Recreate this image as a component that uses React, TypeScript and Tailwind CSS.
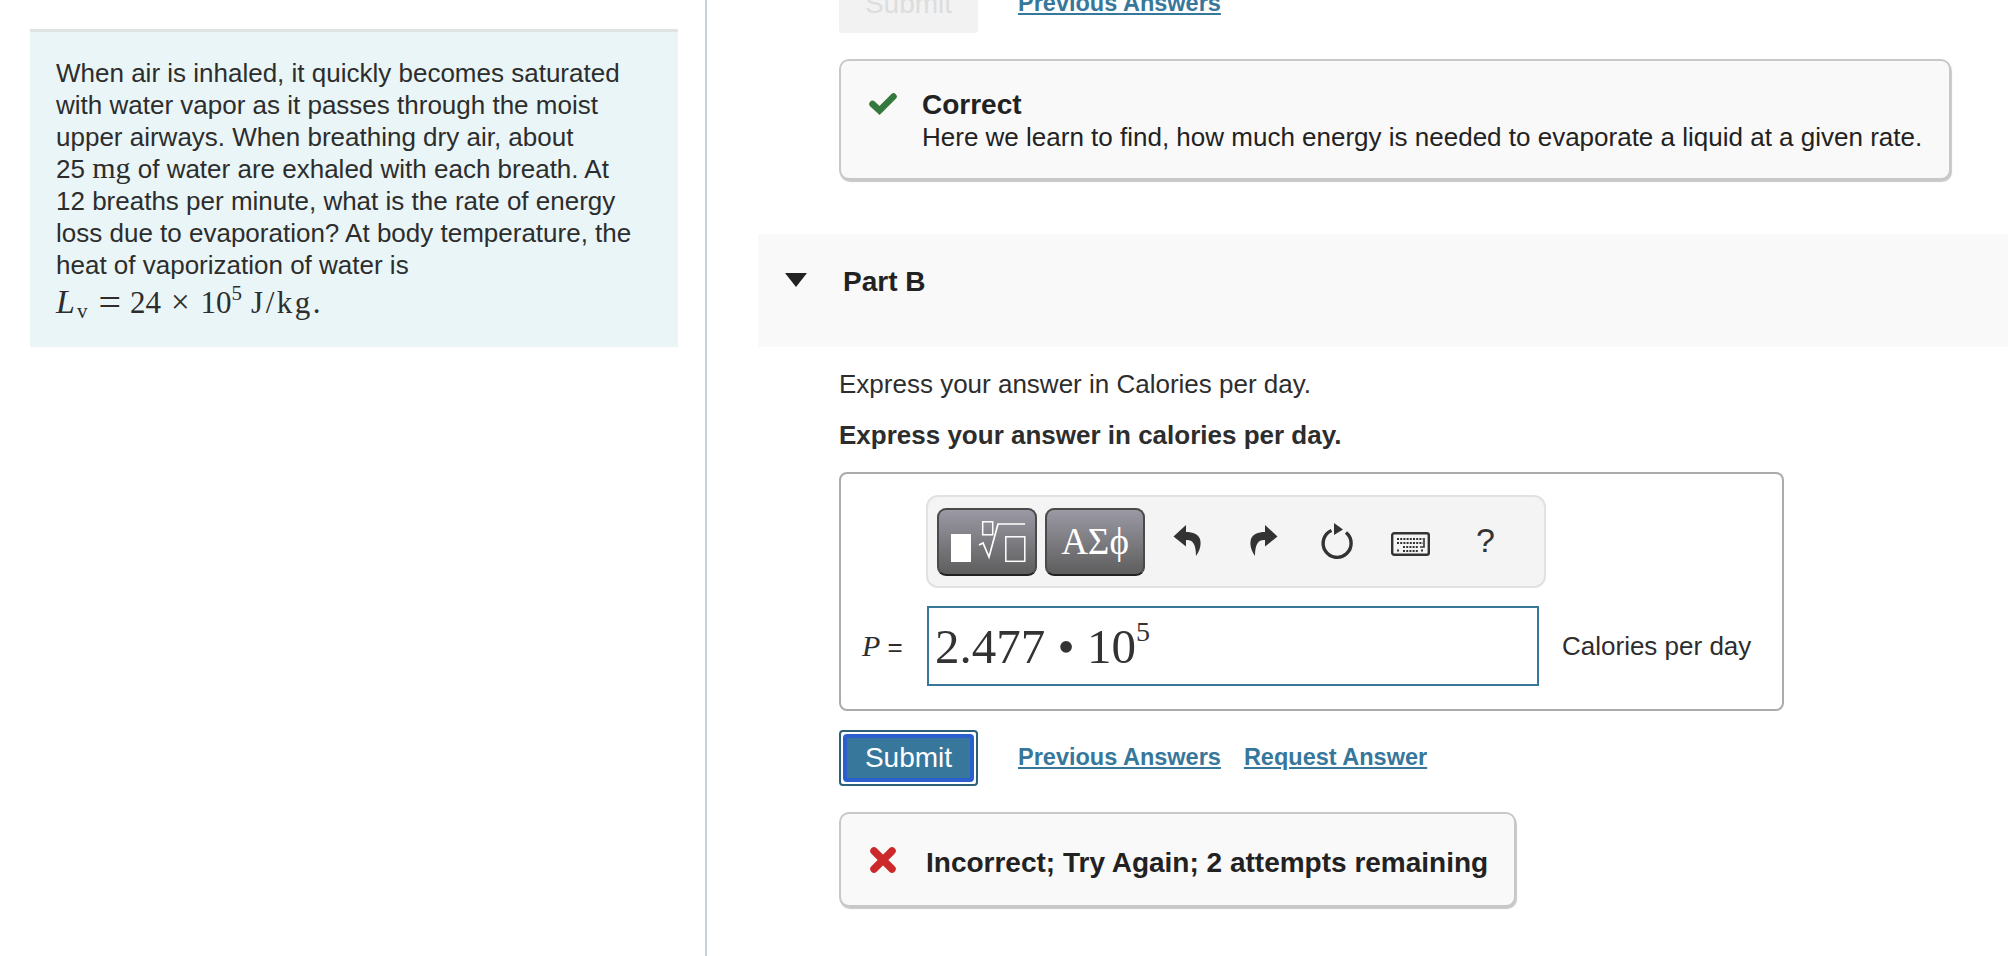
const sans = "font-['Liberation_Sans',Arial,sans-serif]";
const serif = "font-['Liberation_Serif','Times_New_Roman',serif]";

const CheckIcon = () => (
  <svg width="28" height="22" viewBox="0 0 28 22" className="block">
    <path d="M3.5 11 L10.5 17.5 L24.5 3.5" fill="none" stroke="#347a3f" strokeWidth="6.5" strokeLinejoin="miter" strokeLinecap="round" />
  </svg>
);

const CrossIcon = () => (
  <svg width="28" height="28" viewBox="0 0 28 28" className="block">
    <path d="M5 5 L23 23 M23 5 L5 23" fill="none" stroke="#cc2a2a" strokeWidth="7.5" strokeLinecap="round" />
  </svg>
);

const ReplyIcon = ({ flip }: { flip?: boolean }) => (
  <svg width="28" height="31" viewBox="0 0 28 31" className={flip ? "block -scale-x-100" : "block"}>
    <path d="M13 0 L0.5 11.5 L13 21.5 L13 15 C19 14.5 23 18 23 31 C27 25 28.5 20 27 14 C25.5 9.5 20 7 13 7 Z" fill="#333333" />
  </svg>
);

const ResetIcon = () => (
  <svg width="34" height="38" viewBox="0 0 34 38" className="block">
    <path d="M12.5 8.5 A14 14 0 1 0 27 10.5" fill="none" stroke="#333333" strokeWidth="3.4" />
    <path d="M15 1 L24 7.5 L15 13 Z" fill="#333333" />
  </svg>
);

const KeyboardIcon = () => (
  <svg width="39" height="24" viewBox="0 0 39 24" className="block">
    <rect x="1.2" y="1.2" width="36.6" height="21.6" rx="2" fill="#f4f4f4" stroke="#333333" strokeWidth="2.4" />
    <path d="M6 7 H32 M6 11 H32 M12 15 H28 M6 18.5 H8 M12 19 H27 M30 18.5 H33" fill="none" stroke="#333333" strokeWidth="1.8" strokeDasharray="2 1.2" />
    <path d="M33 6 V15 H29" fill="none" stroke="#333333" strokeWidth="1.6" />
  </svg>
);

const TemplateIcon = () => (
  <svg width="76" height="42" viewBox="0 0 76 42" className="block ml-[3px]">
    <rect x="0" y="13" width="20" height="28" fill="#ffffff" />
    <rect x="31.7" y="0.8" width="10" height="13" fill="none" stroke="#ffffff" strokeWidth="1.5" />
    <path d="M28 24 L32 22 L38 36 L47 3 H74" fill="none" stroke="#ffffff" strokeWidth="1.7" />
    <rect x="54.8" y="15.8" width="19" height="24.5" fill="none" stroke="#ffffff" strokeWidth="1.5" />
  </svg>
);

const toolButton =
  "w-[100px] h-[68px] flex items-center justify-center rounded-[9px] border-2 border-[#4a4a4a] border-b-[#222222] bg-gradient-to-b from-[#9b9aa5] to-[#5e5e5e]";

const linkClass = "text-[23.5px] font-bold text-[#37779b] underline leading-8";

export default function App() {
  return (
    <div className={`${sans} h-[956px] w-[2008px] overflow-hidden bg-white flex text-[26px] leading-8 text-[#2d2d2d]`}>
      {/* left column */}
      <div className="w-[707px] h-full shrink-0 border-r-2 border-[#c3d1de] pl-[30px] pr-[27px] pt-[29px]">
        <div className="h-[318px] border-t-[3px] border-[#dfe3e4] bg-[#e9f5f7] pl-[26px] pt-[25px]">
          <p>
            When air is inhaled, it quickly becomes saturated
            <br />
            with water vapor as it passes through the moist
            <br />
            upper airways. When breathing dry air, about
            <br />
            25 <span className={`${serif} text-[30px] leading-none`}>mg</span> of water are exhaled with each breath. At
            <br />
            12 breaths per minute, what is the rate of energy
            <br />
            loss due to evaporation? At body temperature, the
            <br />
            heat of vaporization of water is
          </p>
          <p className={`${serif} text-[31px] leading-[37px] -mt-[1px] flex items-baseline whitespace-nowrap`}>
            <i className="text-[34px]">L</i>
            <span className="text-[21px] relative top-[5px] ml-[2px]">v</span>
            <span className="text-[40px] leading-none relative top-[3px] ml-[11px] mr-[9px]">=</span>
            24
            <span className="text-[33px] leading-none ml-[10px] mr-[11px]">×</span>
            10
            <span className="text-[21px] relative -top-[13px]">5</span>
            <span className="ml-[9px] tracking-[2.5px]">J/kg.</span>
          </p>
        </div>
      </div>

      {/* right column */}
      <div className="flex-1 min-w-0">
        <div className="pl-[132px] -mt-[23px] flex items-center h-14">
          <div className="w-[139px] h-14 rounded-[3px] bg-[#f2f2f2] text-[#dddddd] text-[28px] flex items-center justify-center">
            <span className="-mt-[2px]">Submit</span>
          </div>
          <a className={`${linkClass} ml-10 -mt-1`}>Previous Answers</a>
        </div>

        <div className="ml-[132px] mt-[26px] w-[1112px] h-[121px] rounded-[10px] border-2 border-[#c8c8c8] bg-[#f9f9f9] shadow-[1px_2px_1px_#c8c8c8] flex pl-[28px] pt-[28px]">
          <div className="w-[53px] pt-[4px]">
            <CheckIcon />
          </div>
          <div>
            <div className="font-bold text-[28px] text-[#222222]">Correct</div>
            <div className="text-[#222222]">Here we learn to find, how much energy is needed to evaporate a liquid at a given rate.</div>
          </div>
        </div>

        <div className="ml-[51px] mt-[54px] h-[113px] bg-[#f9f9f9] flex pl-[27px] pt-[32px]">
          <div className="w-[58px] pt-[7px]">
            <svg width="22" height="14" viewBox="0 0 22 14" className="block">
              <path d="M0 0 H22 L11 14 Z" fill="#222222" />
            </svg>
          </div>
          <div className="font-bold text-[28px] text-[#222222]">Part B</div>
        </div>

        <div className="pl-[132px] pt-[21px]">
          <p>Express your answer in Calories per day.</p>
          <p className="font-bold mt-[19px]">Express your answer in calories per day.</p>

          <div className="mt-[21px] w-[945px] h-[239px] rounded-[8px] border-2 border-[#ababab] pt-[21px]">
            <div className="ml-[85px] w-[620px] h-[93px] rounded-[12px] border-2 border-[#e1e1e1] bg-[#f4f4f4] flex items-center pl-[9px]">
              <div className={toolButton}>
                <TemplateIcon />
              </div>
              <div className={`${toolButton} ml-2 ${serif} text-[37px] text-white`}>ΑΣϕ</div>
              <div className="ml-[28px] pb-[2px]">
                <ReplyIcon />
              </div>
              <div className="ml-[49px] pb-[2px]">
                <ReplyIcon flip />
              </div>
              <div className="ml-[41px] pb-[2px]">
                <ResetIcon />
              </div>
              <div className="ml-[38px] pt-[5px]">
                <KeyboardIcon />
              </div>
              <div className="ml-[46px] text-[34px] text-[#333333] pb-[4px]">?</div>
            </div>

            <div className="mt-[18px] flex items-center">
              <div className="w-[86px] pl-[21px] whitespace-nowrap">
                <i className={`${serif} text-[30px]`}>P</i> =
              </div>
              <div className={`${serif} w-[612px] h-[80px] border-2 border-[#37779b] bg-white pl-[6px] text-[49px] leading-[78px] text-[#333333]`}>
                2.477 • 10
                <span className="text-[28px] leading-none relative -top-[22px]">5</span>
              </div>
              <div className="ml-[23px] whitespace-nowrap">Calories per day</div>
            </div>
          </div>

          <div className="mt-[19px] flex items-center h-14">
            <div className="w-[139px] h-14 rounded-[4px] border-2 border-[#2a6079] bg-white p-[2px]">
              <div className="h-full rounded-[4px] border-4 border-[#2b5fce] bg-[#37779b] text-white text-[28px] flex items-center justify-center">
                Submit
              </div>
            </div>
            <a className={`${linkClass} ml-10 -mt-[2px]`}>Previous Answers</a>
            <a className={`${linkClass} ml-[23px] -mt-[2px]`}>Request Answer</a>
          </div>

          <div className="mt-[26px] w-[677px] h-[95px] rounded-[10px] border-2 border-[#c8c8c8] bg-[#f9f9f9] shadow-[1px_2px_1px_#c8c8c8] flex items-center pl-[28px] pt-[6px]">
            <div className="w-[57px] -mt-[6px]">
              <CrossIcon />
            </div>
            <div className="font-bold text-[#222222] text-[28px] whitespace-nowrap">Incorrect; Try Again; 2 attempts remaining</div>
          </div>
        </div>
      </div>
    </div>
  );
}
